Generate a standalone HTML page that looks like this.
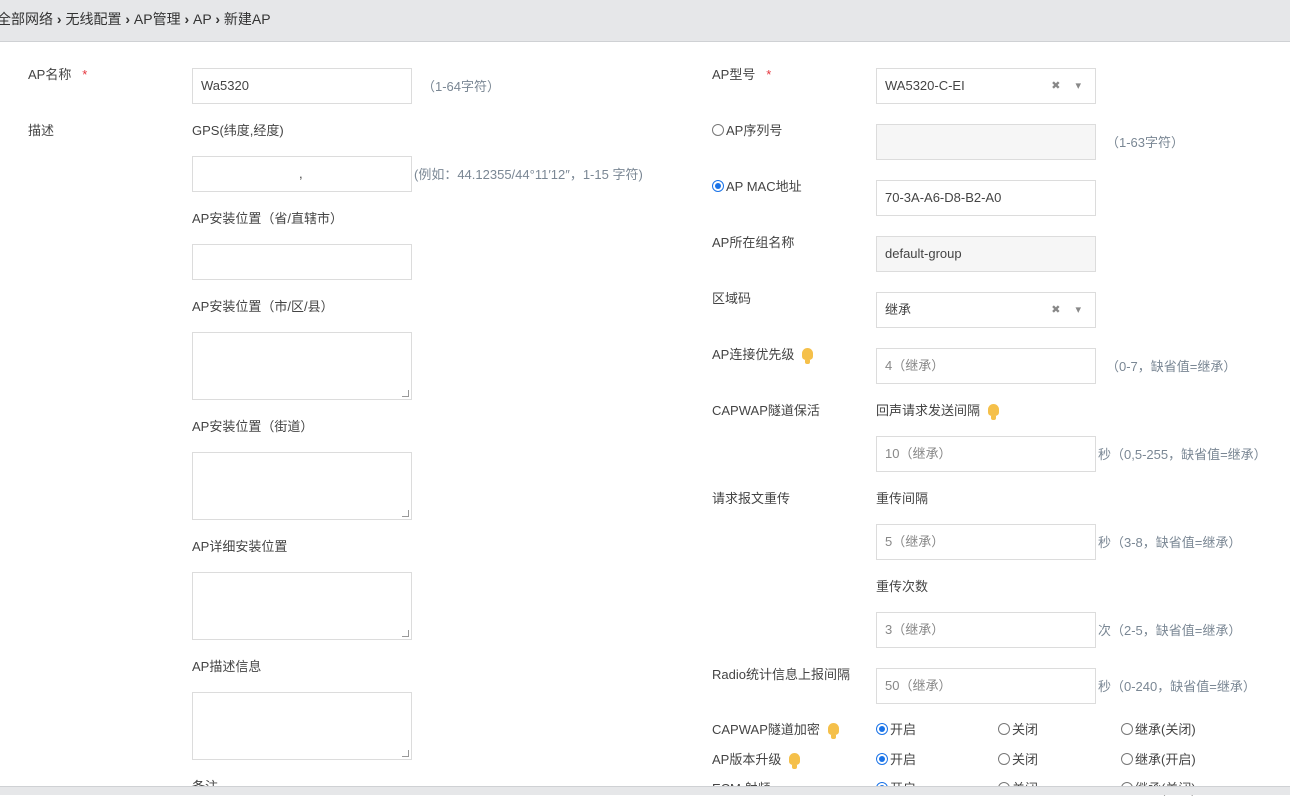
<!DOCTYPE html><html><head><meta charset="utf-8"><style>
*{box-sizing:border-box;margin:0;padding:0}
body{width:1290px;height:795px;overflow:hidden;background:#fff;font-family:"Liberation Sans","Noto Sans CJK SC",sans-serif;font-size:13px;color:#444;position:relative}
.hd{position:absolute;left:0;top:0;width:1290px;height:42px;background:#e6e7e9;border-bottom:1px solid #cfd1d4}
.hd span{position:absolute;left:-3px;top:9px;font-size:14px;color:#333}
.ft{position:absolute;left:0;top:786px;width:1290px;height:9px;background:#e6e7e9;border-top:1px solid #cfd1d4}
.t{position:absolute;white-space:nowrap;line-height:16px}
.h{color:#7a8794}
.in{position:absolute;width:220px;height:36px;border:1px solid #dcdcdc;background:#fff;padding-left:8px;line-height:34px;color:#444;white-space:nowrap}
.ta{height:68px}
.gr{background:#f6f6f6}
.ph{color:#888}
.st{color:#e5353d}
.sel::after{content:"✖  ▾";position:absolute;right:8px;top:0;color:#888;font-size:11px;letter-spacing:6px}
.r{display:inline-block;width:12px;height:12px;border:1px solid #777;border-radius:50%;vertical-align:-1px;margin-right:2px;position:relative}
.r.on{border-color:#1a73e8}
.r.on::after{content:"";position:absolute;left:2px;top:2px;width:6px;height:6px;border-radius:50%;background:#1a73e8}
.b{display:inline-block;width:11px;height:12px;background:#f5c04a;border-radius:6px 6px 4px 4px;vertical-align:-1px;margin-left:8px;position:relative}
.b::after{content:"";position:absolute;left:3px;top:12px;width:5px;height:4px;background:#f5c04a;border-radius:0 0 2px 2px}
.grip{position:absolute;right:2px;bottom:2px;width:7px;height:7px;border-right:1px solid #999;border-bottom:1px solid #999}
</style></head><body>
<div class="hd"><span>全部网络 <b>›</b> 无线配置 <b>›</b> AP管理 <b>›</b> AP <b>›</b> 新建AP</span></div>
<div class="t" style="left:28px;top:67px">AP名称 &nbsp;&nbsp;<span class="st">*</span></div>
<div class="in" style="left:192px;top:68px">Wa5320</div>
<div class="t h" style="left:422px;top:79px">（1-64字符）</div>
<div class="t" style="left:28px;top:123px">描述</div>
<div class="t" style="left:192px;top:123px">GPS(纬度,经度)</div>
<div class="in" style="left:192px;top:156px;padding-left:106px">,</div>
<div class="t h" style="left:414px;top:167px">(例如：44.12355/44°11′12″，1-15 字符)</div>
<div class="t" style="left:192px;top:211px">AP安装位置（省/直辖市）</div>
<div class="in" style="left:192px;top:244px"></div>
<div class="t" style="left:192px;top:299px">AP安装位置（市/区/县）</div>
<div class="in ta" style="left:192px;top:332px"><i class="grip"></i></div>
<div class="t" style="left:192px;top:419px">AP安装位置（街道）</div>
<div class="in ta" style="left:192px;top:452px"><i class="grip"></i></div>
<div class="t" style="left:192px;top:539px">AP详细安装位置</div>
<div class="in ta" style="left:192px;top:572px"><i class="grip"></i></div>
<div class="t" style="left:192px;top:659px">AP描述信息</div>
<div class="in ta" style="left:192px;top:692px"><i class="grip"></i></div>
<div class="t" style="left:192px;top:779px">备注</div>

<div class="t" style="left:712px;top:67px">AP型号 &nbsp;&nbsp;<span class="st">*</span></div>
<div class="in sel" style="left:876px;top:68px">WA5320-C-EI</div>
<div class="t" style="left:712px;top:123px"><i class="r"></i>AP序列号</div>
<div class="in gr" style="left:876px;top:124px"></div>
<div class="t h" style="left:1106px;top:135px">（1-63字符）</div>
<div class="t" style="left:712px;top:179px"><i class="r on"></i>AP MAC地址</div>
<div class="in" style="left:876px;top:180px">70-3A-A6-D8-B2-A0</div>
<div class="t" style="left:712px;top:235px">AP所在组名称</div>
<div class="in gr" style="left:876px;top:236px">default-group</div>
<div class="t" style="left:712px;top:291px">区域码</div>
<div class="in sel" style="left:876px;top:292px">继承</div>
<div class="t" style="left:712px;top:347px">AP连接优先级<i class="b"></i></div>
<div class="in ph" style="left:876px;top:348px">4（继承）</div>
<div class="t h" style="left:1106px;top:359px">（0-7，缺省值=继承）</div>
<div class="t" style="left:712px;top:403px">CAPWAP隧道保活</div>
<div class="t" style="left:876px;top:403px">回声请求发送间隔<i class="b"></i></div>
<div class="in ph" style="left:876px;top:436px">10（继承）</div>
<div class="t h" style="left:1098px;top:447px">秒（0,5-255，缺省值=继承）</div>
<div class="t" style="left:712px;top:491px">请求报文重传</div>
<div class="t" style="left:876px;top:491px">重传间隔</div>
<div class="in ph" style="left:876px;top:524px">5（继承）</div>
<div class="t h" style="left:1098px;top:535px">秒（3-8，缺省值=继承）</div>
<div class="t" style="left:876px;top:579px">重传次数</div>
<div class="in ph" style="left:876px;top:612px">3（继承）</div>
<div class="t h" style="left:1098px;top:623px">次（2-5，缺省值=继承）</div>
<div class="t" style="left:712px;top:667px">Radio统计信息上报间隔</div>
<div class="in ph" style="left:876px;top:668px">50（继承）</div>
<div class="t h" style="left:1098px;top:679px">秒（0-240，缺省值=继承）</div>
<div class="t" style="left:712px;top:722px">CAPWAP隧道加密<i class="b"></i></div>
<div class="t" style="left:876px;top:722px"><i class="r on"></i>开启</div>
<div class="t" style="left:998px;top:722px"><i class="r"></i>关闭</div>
<div class="t" style="left:1121px;top:722px"><i class="r"></i>继承(关闭)</div>
<div class="t" style="left:712px;top:752px">AP版本升级<i class="b"></i></div>
<div class="t" style="left:876px;top:752px"><i class="r on"></i>开启</div>
<div class="t" style="left:998px;top:752px"><i class="r"></i>关闭</div>
<div class="t" style="left:1121px;top:752px"><i class="r"></i>继承(开启)</div>
<div class="t" style="left:712px;top:781px">ECM 射频</div>
<div class="t" style="left:876px;top:781px"><i class="r on"></i>开启</div>
<div class="t" style="left:998px;top:781px"><i class="r"></i>关闭</div>
<div class="t" style="left:1121px;top:781px"><i class="r"></i>继承(关闭)</div>
<div class="ft"></div>
</body></html>
